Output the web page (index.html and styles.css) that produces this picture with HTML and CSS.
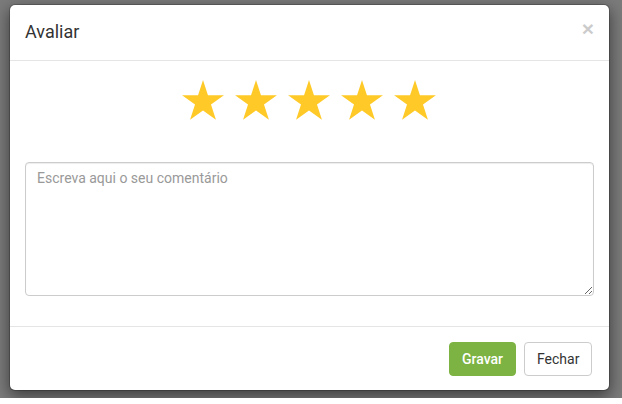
FILE: index.html
```html
<!DOCTYPE html>
<html lang="pt">
<head>
<meta charset="utf-8">
<title>Avaliar</title>
<link rel="stylesheet" href="styles.css">
</head>
<body>
<div class="backdrop">
  <div class="modal">
    <div class="modal-header">
      <h4 class="modal-title">Avaliar</h4>
      <button class="close" type="button">&times;</button>
    </div>
    <div class="modal-body">
      <div class="stars">
        <svg class="star" viewBox="1 0 42 40"><polygon points="22,0 26.94,15.2 42.92,15.2 29.99,24.6 34.93,39.8 22,30.4 9.07,39.8 14.01,24.6 1.08,15.2 17.06,15.2"/></svg>
        <svg class="star" viewBox="1 0 42 40"><polygon points="22,0 26.94,15.2 42.92,15.2 29.99,24.6 34.93,39.8 22,30.4 9.07,39.8 14.01,24.6 1.08,15.2 17.06,15.2"/></svg>
        <svg class="star" viewBox="1 0 42 40"><polygon points="22,0 26.94,15.2 42.92,15.2 29.99,24.6 34.93,39.8 22,30.4 9.07,39.8 14.01,24.6 1.08,15.2 17.06,15.2"/></svg>
        <svg class="star" viewBox="1 0 42 40"><polygon points="22,0 26.94,15.2 42.92,15.2 29.99,24.6 34.93,39.8 22,30.4 9.07,39.8 14.01,24.6 1.08,15.2 17.06,15.2"/></svg>
        <svg class="star" viewBox="1 0 42 40"><polygon points="22,0 26.94,15.2 42.92,15.2 29.99,24.6 34.93,39.8 22,30.4 9.07,39.8 14.01,24.6 1.08,15.2 17.06,15.2"/></svg>
      </div>
      <textarea class="comment" placeholder="Escreva aqui o seu comentário"></textarea>
    </div>
    <div class="modal-footer">
      <button class="btn btn-success" type="button">Gravar</button>
      <button class="btn btn-default" type="button">Fechar</button>
    </div>
  </div>
</div>
</body>
</html>
```
FILE: styles.css
```css
html, body {
  margin: 0;
  padding: 0;
  background: #ffffff;
  font-family: Roboto, "Noto Sans", sans-serif;
}
.backdrop {
  height: 398px;
  background: #7b7b7b;
  padding: 4px 12px 0 9px;
  box-sizing: border-box;
}
.modal {
  width: 601px;
  background: #fff;
  border: 1px solid rgba(0,0,0,.2);
  border-radius: 6px;
  box-shadow: 0 5px 15px rgba(0,0,0,.5);
  box-sizing: border-box;
  background-clip: padding-box;
}
.modal-header {
  display: flex;
  align-items: center;
  justify-content: space-between;
  height: 55px;
  padding: 0 15px;
  border-bottom: 1px solid #e5e5e5;
}
.modal-title {
  margin: -2px 0 0;
  font-size: 18px;
  font-weight: 400;
  color: #333;
}
.close {
  border: 0;
  background: none;
  padding: 0;
  margin-top: -8px;
  font-family: "Liberation Sans", Arial, sans-serif;
  font-size: 21px;
  font-weight: 700;
  line-height: 1;
  color: #000;
  opacity: .2;
}
.modal-body {
  padding: 19px 15px 30px;
}
.stars {
  display: flex;
  justify-content: center;
  gap: 11px;
  margin-bottom: 42px;
  padding-right: 2px;
}
.star {
  width: 42px;
  height: 40px;
  fill: #ffca28;
  display: block;
}
.comment {
  display: block;
  width: 100%;
  height: 134px;
  box-sizing: border-box;
  border: 1px solid #ccc;
  border-radius: 4px;
  padding: 6px 11px;
  font-family: Roboto, "Noto Sans", sans-serif;
  font-size: 14px;
  line-height: 1.42857;
  color: #555;
  resize: vertical;
  box-shadow: inset 0 1px 1px rgba(0,0,0,.075);
}
.comment::placeholder {
  color: #999;
}
.modal-footer {
  display: flex;
  justify-content: flex-end;
  gap: 8px;
  padding: 15px 17px 14px 15px;
  border-top: 1px solid #e5e5e5;
}
.btn {
  height: 34px;
  padding: 0 12px;
  border-radius: 4px;
  font-family: Roboto, "Noto Sans", sans-serif;
  font-size: 14px;
  border: 1px solid transparent;
}
.btn-success {
  background: #7cb342;
  border-color: #7cb342;
  color: #fff;
  font-weight: 500;
  width: 67px;
}
.btn-default {
  background: #fff;
  border-color: #ccc;
  color: #333;
  width: 68px;
}
```
